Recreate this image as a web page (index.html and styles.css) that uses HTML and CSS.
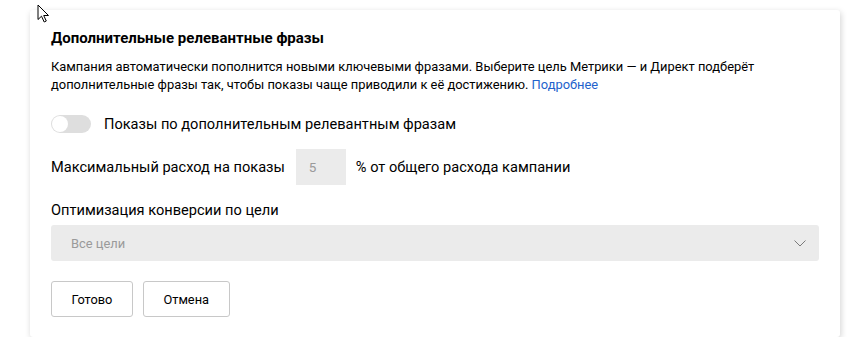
FILE: index.html
```html
<!DOCTYPE html>
<html lang="ru">
<head>
<meta charset="utf-8">
<title>Дополнительные релевантные фразы</title>
<link rel="stylesheet" href="styles.css">
</head>
<body>
<div class="card">
  <h2 class="title">Дополнительные релевантные фразы</h2>
  <p class="desc"><span>Кампания автоматически пополнится новыми ключевыми фразами. Выберите цель Метрики — и Директ подберёт дополнительные фразы так, чтобы показы чаще приводили к её достижению.</span> <a class="link" href="#">Подробнее</a></p>
  <div class="toggle-row">
    <span class="toggle"><span class="knob"></span></span>
    <span class="label">Показы по дополнительным релевантным фразам</span>
  </div>
  <div class="spend-row">
    <span class="label">Максимальный расход на показы</span>
    <span class="num-input">5</span>
    <span class="label">% от общего расхода кампании</span>
  </div>
  <div class="field-label">Оптимизация конверсии по цели</div>
  <div class="select">
    <span>Все цели</span>
    <svg class="chev" width="12" height="7" viewBox="0 0 12 7"><path d="M0.5 0.5 L6 6 L11.5 0.5" fill="none" stroke="#7a7a7a" stroke-width="1"/></svg>
  </div>
  <div class="buttons">
    <button class="btn">Готово</button>
    <button class="btn">Отмена</button>
  </div>
</div>
<svg class="cursor" width="14" height="19" viewBox="0 0 14 19"><path d="M1 1 L1 15.5 L4.5 12.2 L7.2 18 L9.3 17 L6.7 11.5 L11.5 11.5 Z" fill="#fff" stroke="#000" stroke-width="1" stroke-linejoin="miter"/></svg>
</body>
</html>
```

FILE: styles.css
```css
* { box-sizing: border-box; }
html, body { margin: 0; background: #fff; }
body {
  padding: 10px 20px 0 30px;
  font-family: Roboto, "Liberation Sans", sans-serif;
  color: #000;
  position: relative;
}
.card {
  width: 810px;
  height: 327px;
  background: #fff;
  border-radius: 3px;
  box-shadow: 1px 2px 6px rgba(0,0,0,0.18);
  padding: 18px 21px 20px 21px;
}
.title {
  margin: 0;
  font-size: 15px;
  line-height: 20px;
  font-weight: 700;
}
.desc {
  margin: 10px 0 0;
  font-size: 12.9px;
  line-height: 18px;
}
.link { color: #2262cc; text-decoration: none; }
.toggle-row {
  margin-top: 20px;
  display: flex;
  align-items: center;
  gap: 13px;
  height: 20px;
}
.toggle {
  width: 40px;
  height: 18px;
  border-radius: 9px;
  background: #dedede;
  display: flex;
  align-items: center;
  padding: 1px;
}
.knob {
  width: 16px;
  height: 16px;
  border-radius: 50%;
  background: #fff;
}
.label {
  font-size: 14.6px;
  line-height: 20px;
}
.spend-row {
  margin-top: 15px;
  display: flex;
  align-items: center;
}
.num-input {
  width: 50px;
  height: 36px;
  background: #ebebeb;
  color: #9a9a9a;
  font-size: 13.5px;
  display: flex;
  align-items: center;
  padding-left: 13px;
  margin: 0 10px 0 11px;
}
.field-label {
  margin-top: 15px;
  font-size: 14.6px;
  line-height: 20px;
}
.select {
  margin-top: 5px;
  height: 36px;
  width: 768px;
  background: #ebebeb;
  border-radius: 3px;
  display: flex;
  align-items: center;
  justify-content: space-between;
  padding: 0 13px 0 20px;
  font-size: 12.9px;
  color: #9a9a9a;
}
.buttons {
  margin-top: 20px;
  display: flex;
  gap: 10px;
}
.btn {
  height: 36px;
  padding: 0 19.5px;
  background: #fff;
  border: 1px solid #c8c8c8;
  border-radius: 3px;
  font-family: inherit;
  font-size: 12.8px;
  color: #000;
}
.cursor {
  position: absolute;
  left: 37px;
  top: 4px;
}
```
